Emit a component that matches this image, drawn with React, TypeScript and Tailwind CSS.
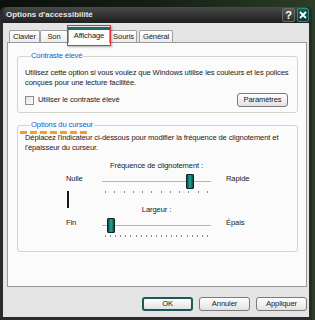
import React from 'react';

// petite glissière façon XP (piste + curseur + graduations)
const Slider = ({ pos, ticks }: { pos: number; ticks: number }) => (
  <div className="w-[109px]">
    <div className="relative h-[15px]">
      <div className="absolute left-0 right-0 top-[7px] h-[2px] border-t border-[#b4b4aa] bg-white" />
      <div
        className="absolute top-0 h-[15px] w-[8px] rounded-[1px] border border-[#0b2624] bg-gradient-to-r from-[#0e4a45] via-[#23a896] to-[#0e4a45]"
        style={{ left: pos }}
      />
    </div>
    <div className="mt-[2px] flex justify-between px-[3px]">
      {Array.from({ length: ticks }).map((_, i) => (
        <div key={i} className="h-[2px] w-px bg-[#8c8c8c]" />
      ))}
    </div>
  </div>
);

const Tab = ({ label, w, active }: { label: string; w: string; active?: boolean }) =>
  active ? (
    <div className={'relative z-10 mb-[-1px] flex h-[16px] items-center justify-center border-x border-[#a0a0a0] bg-[#fcfcfc] ' + w}>
      <div className="absolute left-[-1px] right-[-1px] top-0 h-[3px] bg-[#1d6e5e]" />
      <span className="mt-[2px]">{label}</span>
    </div>
  ) : (
    <div className={'mt-[3px] flex h-[12px] items-center justify-center rounded-t-[2px] border border-b-0 border-[#a0a0a0] bg-gradient-to-b from-white to-[#ececec] ' + w}>
      {label}
    </div>
  );

const Button = ({ label, primary }: { label: string; primary?: boolean }) => (
  <div
    className={
      'flex h-[14px] w-[51px] items-center justify-center rounded-[3px] bg-gradient-to-b from-white to-[#e2e2e2] ' +
      (primary ? 'border-[2px] border-[#1b5a55]' : 'border border-[#7a7a7a]')
    }
  >
    {label}
  </div>
);

export default function App() {
  return (
    <div
      className="h-[320px] w-[315px] overflow-hidden bg-gradient-to-r from-[#0b100b] via-[#142014] to-[#2b3e26] pt-[7px] text-[7.6px] leading-[10px] tracking-[-0.12px] text-[#1a1a1a]"
      style={{ fontFamily: '"Liberation Sans", Arial, sans-serif' }}
    >
      <div className="flex h-[313px] w-[312px] flex-col rounded-t-[5px] bg-[#2a2a2a] px-[3px] pb-[3px]">
        {/* barre de titre */}
        <div className="flex h-[16px] items-center justify-between rounded-t-[5px] bg-gradient-to-b from-[#4a4a4a] to-[#1f1f1f] pl-[3px]">
          <span className="text-[8px] font-bold tracking-normal text-[#e6e6e6]">Options d'accessibilité</span>
          <div className="flex items-center gap-[2px]">
            <div className="flex h-[14px] w-[13px] items-center justify-center rounded-[2px] border border-[#6a6a6a] bg-gradient-to-b from-[#5a5a5a] to-[#2e2e2e] text-[11px] font-bold text-white">
              ?
            </div>
            <div className="flex h-[14px] w-[12px] items-center justify-center rounded-[2px] border border-[#2a8a80] bg-gradient-to-b from-[#145c56] to-[#0b3a36]">
              <svg width="8" height="8" viewBox="0 0 8 8">
                <path d="M1 1 L7 7 M7 1 L1 7" stroke="white" strokeWidth="1.8" />
              </svg>
            </div>
          </div>
        </div>

        {/* zone cliente */}
        <div className="relative flex flex-1 flex-col bg-[#e4e4e4] pl-[4px] pr-[2px] pt-[4px]">
          <div className="flex h-[15px] items-start pl-[2px]">
            <Tab label="Clavier" w="w-[31px]" />
            <Tab label="Son" w="w-[28px]" />
            <Tab label="Affichage" w="w-[42px]" active />
            <Tab label="Souris" w="w-[27px]" />
            <div className="w-[2px]" />
            <Tab label="Général" w="w-[34px]" />
          </div>

          <div className="h-[245px] border border-[#9a9a9a] bg-[#fbfbfb] pl-[9px] pr-[8px] pt-[8px]">
            <fieldset className="h-[62px] rounded-[3px] border border-[#d4d4c8] px-[7px]">
              <legend className="ml-[5px] px-[1px] text-[#2159d6]">Contraste élevé</legend>
              <p className="mt-[7px] whitespace-nowrap">
                Utilisez cette option si vous voulez que Windows utilise les couleurs et les polices
                <br />
                conçues pour une lecture facilitée.
              </p>
              <div className="mt-[5px] flex items-center justify-between pr-[2px]">
                <div className="flex items-center gap-[4px]">
                  <div className="h-[9px] w-[9px] border border-[#8e8e8e] bg-gradient-to-br from-[#e0e0e0] to-white" />
                  <span>Utiliser le contraste élevé</span>
                </div>
                <Button label="Paramètres" />
              </div>
            </fieldset>

            <fieldset className="mt-[7px] h-[132px] rounded-[3px] border border-[#d4d4c8] px-[7px]">
              <legend className="ml-[5px] px-[1px] text-[#2159d6]">Options du curseur</legend>
              <p className="mt-[3px] whitespace-nowrap">
                Déplacez l'indicateur ci-dessous pour modifier la fréquence de clignotement et
                <br />
                l'épaisseur du curseur.
              </p>

              <div className="mt-[8px] pl-[41px]">
                <div className="flex">
                  <div className="w-[36px]" />
                  <div className="w-[109px] whitespace-nowrap text-center">Fréquence de clignotement :</div>
                </div>
                <div className="mt-[3px] flex items-start">
                  <div className="w-[36px]">
                    <div>Nulle</div>
                    <div className="ml-[1px] mt-[7px] h-[17px] w-[2px] bg-[#1a1a1a]" />
                  </div>
                  <Slider pos={84} ticks={12} />
                  <div className="pl-[15px]">Rapide</div>
                </div>
                <div className="mt-[-3px] flex">
                  <div className="w-[36px]" />
                  <div className="w-[109px] text-center">Largeur :</div>
                </div>
                <div className="mt-[3px] flex items-start">
                  <div className="w-[36px]">Fin</div>
                  <Slider pos={5} ticks={21} />
                  <div className="pl-[15px]">Épais</div>
                </div>
              </div>
            </fieldset>
          </div>

          <div className="mt-[10px] flex justify-end gap-[6px]">
            <Button label="OK" primary />
            <Button label="Annuler" />
            <Button label="Appliquer" />
          </div>

          {/* annotations */}
          <div className="pointer-events-none absolute left-[64px] top-[2px] h-[21px] w-[44px] border-[1.5px] border-[#e0302c] shadow-[1px_1px_2px_rgba(0,0,0,0.3)]" />
          <div className="pointer-events-none absolute left-[17px] top-[108px] flex gap-[3px]">
            {Array.from({ length: 7 }).map((_, i) => (
              <div key={i} className="h-[3px] w-[7px] bg-[#f2a02a]" />
            ))}
          </div>
        </div>
      </div>
    </div>
  );
}
